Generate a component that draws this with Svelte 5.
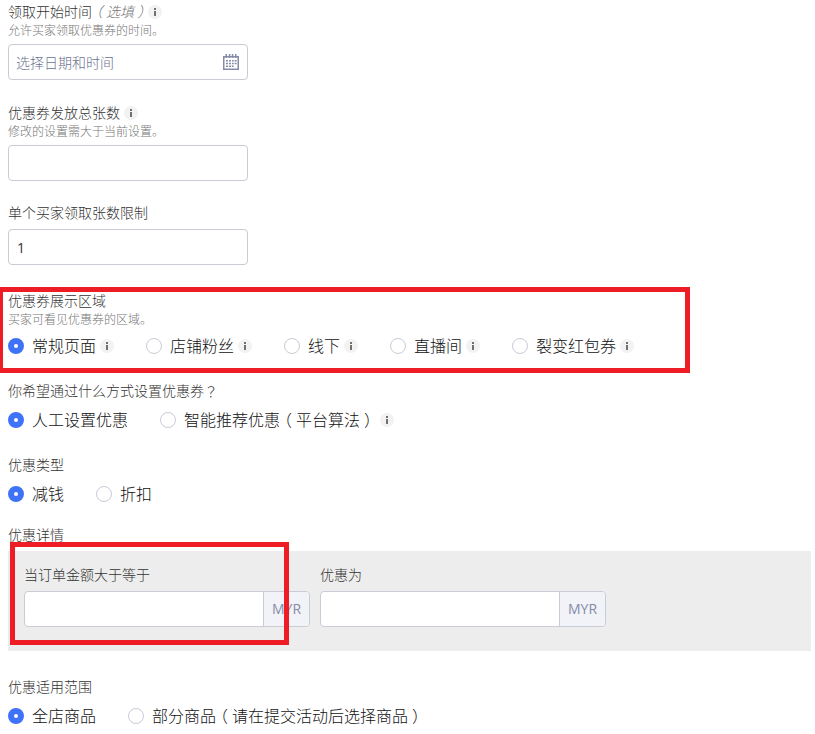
<script lang="ts">
  let startTime = $state('');
  let total = $state('');
  let limit = $state('1');
  let minAmount = $state('');
  let discount = $state('');

  let area = $state('page');
  let method = $state('manual');
  let kind = $state('money');
  let scope = $state('all');

  type Option = { value: string; label: string; note?: string; info?: boolean };

  const areas: Option[] = [
    { value: 'page', label: '常规页面', info: true },
    { value: 'fans', label: '店铺粉丝', info: true },
    { value: 'offline', label: '线下', info: true },
    { value: 'live', label: '直播间', info: true },
    { value: 'share', label: '裂变红包券', info: true }
  ];
  const methods: Option[] = [
    { value: 'manual', label: '人工设置优惠' },
    { value: 'smart', label: '智能推荐优惠', note: '平台算法', info: true }
  ];
  const kinds: Option[] = [
    { value: 'money', label: '减钱' },
    { value: 'percent', label: '折扣' }
  ];
  const scopes: Option[] = [
    { value: 'all', label: '全店商品' },
    { value: 'part', label: '部分商品', note: '请在提交活动后选择商品' }
  ];
</script>

{#snippet info()}
  <svg class="info" viewBox="0 0 14 14" width="14" height="14">
    <circle cx="7" cy="7" r="7" fill="#f2f2f2" />
    <path d="M6 3h2v2H6zM6 6h2v5H6z" fill="#707070" />
  </svg>
{/snippet}

{#snippet punct(mark: string)}<span class="punct" class:bracket={mark !== '？'} lang="zh-Hant">{mark}</span>{/snippet}

{#snippet radios(name: string, options: Option[], selected: string, pick: (v: string) => void)}
  <div class="radios">
    {#each options as o}
      <label class="radio">
        <input type="radio" {name} value={o.value} checked={selected === o.value} onchange={() => pick(o.value)} />
        <span>{o.label}{#if o.note}{@render punct('（')}{o.note}{@render punct('）')}{/if}</span>
        {#if o.info}{@render info()}{/if}
      </label>
    {/each}
  </div>
{/snippet}

<form class="coupon">
  <section class="field start">
    <div class="title">领取开始时间<em>{@render punct('（')}选填{@render punct('）')}</em>{@render info()}</div>
    <div class="hint">允许买家领取优惠券的时间。</div>
    <div class="box">
      <input type="text" placeholder="选择日期和时间" bind:value={startTime} />
      <svg class="calendar" viewBox="0 0 16 16" width="16" height="16">
        <path d="M.75 2.75h14.5v12.5H.75z" fill="none" stroke="#858ba6" stroke-width="1.5" />
        <path d="M2.5 0H4v4H2.5zM5.8 0h1.5v4H5.8zM8.8 0h1.5v4H8.8zM12 0h1.5v4H12z" fill="#858ba6" />
        <path d="M3 6h2v1.4H3zM6 6h2v1.4H6zM9 6h1.7v1.4H9zM11.6 6h2v1.4h-2zM3 8.8h2v1.4H3zM6 8.8h2v1.4H6zM9 8.8h1.7v1.4H9zM11.6 8.8h2v1.4h-2zM3 11.6h2V13H3zM6 11.6h2V13H6zM9 11.6h1.7V13H9z" fill="#858ba6" />
      </svg>
    </div>
  </section>

  <section class="field total">
    <div class="title">优惠券发放总张数{@render info()}</div>
    <div class="hint">修改的设置需大于当前设置。</div>
    <div class="box"><input type="text" bind:value={total} /></div>
  </section>

  <section class="field limit">
    <div class="title">单个买家领取张数限制</div>
    <div class="box"><input type="text" bind:value={limit} /></div>
  </section>

  <section class="field area">
    <div class="title">优惠券展示区域</div>
    <div class="hint">买家可看见优惠券的区域。</div>
    {@render radios('area', areas, area, (v) => (area = v))}
    <div class="mark"></div>
  </section>

  <section class="field">
    <div class="title">你希望通过什么方式设置优惠券{@render punct('？')}</div>
    {@render radios('method', methods, method, (v) => (method = v))}
  </section>

  <section class="field">
    <div class="title">优惠类型</div>
    {@render radios('kind', kinds, kind, (v) => (kind = v))}
  </section>

  <section class="field detail">
    <div class="title">优惠详情</div>
    <div class="panel">
      <div>
        <div class="title">当订单金额大于等于</div>
        <div class="box money"><input type="text" bind:value={minAmount} /><span class="unit">MYR</span></div>
      </div>
      <div>
        <div class="title">优惠为</div>
        <div class="box money"><input type="text" bind:value={discount} /><span class="unit">MYR</span></div>
      </div>
    </div>
    <div class="mark"></div>
  </section>

  <section class="field scope">
    <div class="title">优惠适用范围</div>
    {@render radios('scope', scopes, scope, (v) => (scope = v))}
  </section>
</form>

<style>
  :global(body) {
    margin: 0;
    background: #fff;
    overflow: hidden;
  }

  .coupon {
    box-sizing: border-box;
    height: 734px;
    padding: 2px 4px 0 8px;
    overflow: hidden;
    font-family: 'Open Sans', 'Noto Sans CJK SC', sans-serif;
    font-weight: 300;
    color: #333;
  }

  .field {
    position: relative;
    margin-top: 23px;
  }

  .field.start {
    margin-top: 0;
  }

  .field.total + .field {
    margin-top: 22px;
  }

  .field.area,
  .field.scope {
    margin-top: 26px;
  }

  .field.detail {
    margin-top: 19px;
  }

  .title {
    display: flex;
    align-items: center;
    height: 20px;
    font-size: 14px;
    line-height: 20px;
    color: #333;
    white-space: nowrap;
  }

  .title em {
    color: #777;
  }

  .title .info {
    margin-left: 4px;
  }

  .title em + .info {
    margin-left: 0;
  }

  .punct {
    font-family: 'Noto Sans CJK TC', sans-serif;
    line-height: 1;
  }

  /* half-width bracket centred in a full-width cell */
  .bracket {
    display: inline-block;
    width: 1em;
    text-align: center;
    font-feature-settings: 'halt' 1;
  }

  .hint {
    height: 18px;
    font-size: 12px;
    line-height: 18px;
    color: #777;
  }

  .info {
    flex: none;
  }

  .box {
    display: flex;
    align-items: center;
    box-sizing: border-box;
    width: 240px;
    height: 36px;
    margin-top: 6px;
    border: 1px solid #c9cbd6;
    border-radius: 4px;
    background: #fff;
    overflow: hidden;
  }

  .hint + .box {
    margin-top: 4px;
  }

  .box input {
    flex: 1;
    min-width: 0;
    height: 34px;
    padding: 0 7px;
    border: 0;
    outline: none;
    background: none;
    font: inherit;
    font-size: 14px;
    font-weight: 400;
    color: #333;
  }

  .box input::placeholder {
    color: #6c728f;
    font-weight: 300;
    opacity: 1;
  }

  .limit .box input {
    padding: 0 8px;
  }

  .calendar {
    margin-right: 8px;
  }

  .box.money {
    width: 286px;
  }

  .unit {
    box-sizing: border-box;
    width: 46px;
    height: 34px;
    border-left: 1px solid #c9cbd6;
    background: #f2f3f8;
    font-size: 14px;
    font-weight: 400;
    line-height: 34px;
    text-align: center;
    color: #858ba6;
  }

  .radios {
    display: flex;
    gap: 32px;
    height: 24px;
    margin-top: 7px;
  }

  .hint + .radios {
    margin-top: 5px;
  }

  .radio {
    display: flex;
    align-items: center;
    font-size: 16px;
    line-height: 24px;
    white-space: nowrap;
    color: #111;
  }

  .radio input {
    appearance: none;
    box-sizing: border-box;
    width: 16px;
    height: 16px;
    margin: 0 8px 0 0;
    border: 1px solid #c9cbd6;
    border-radius: 50%;
    background: #fff;
  }

  .radio input:checked {
    border: 6px solid #3f73f7;
  }

  .radio .info {
    margin-left: 4px;
  }

  .panel {
    display: flex;
    gap: 10px;
    box-sizing: border-box;
    height: 100px;
    margin-top: 6px;
    padding: 14px 16px;
    background: #ededed;
  }

  /* red frames drawn over the form */
  .mark {
    position: absolute;
    box-sizing: border-box;
    border: 5px solid #ee1c25;
    pointer-events: none;
  }

  .area .mark {
    top: -4px;
    left: -10px;
    width: 692px;
    height: 86px;
  }

  .detail .mark {
    top: 17px;
    left: 2px;
    width: 279px;
    height: 103px;
  }
</style>
